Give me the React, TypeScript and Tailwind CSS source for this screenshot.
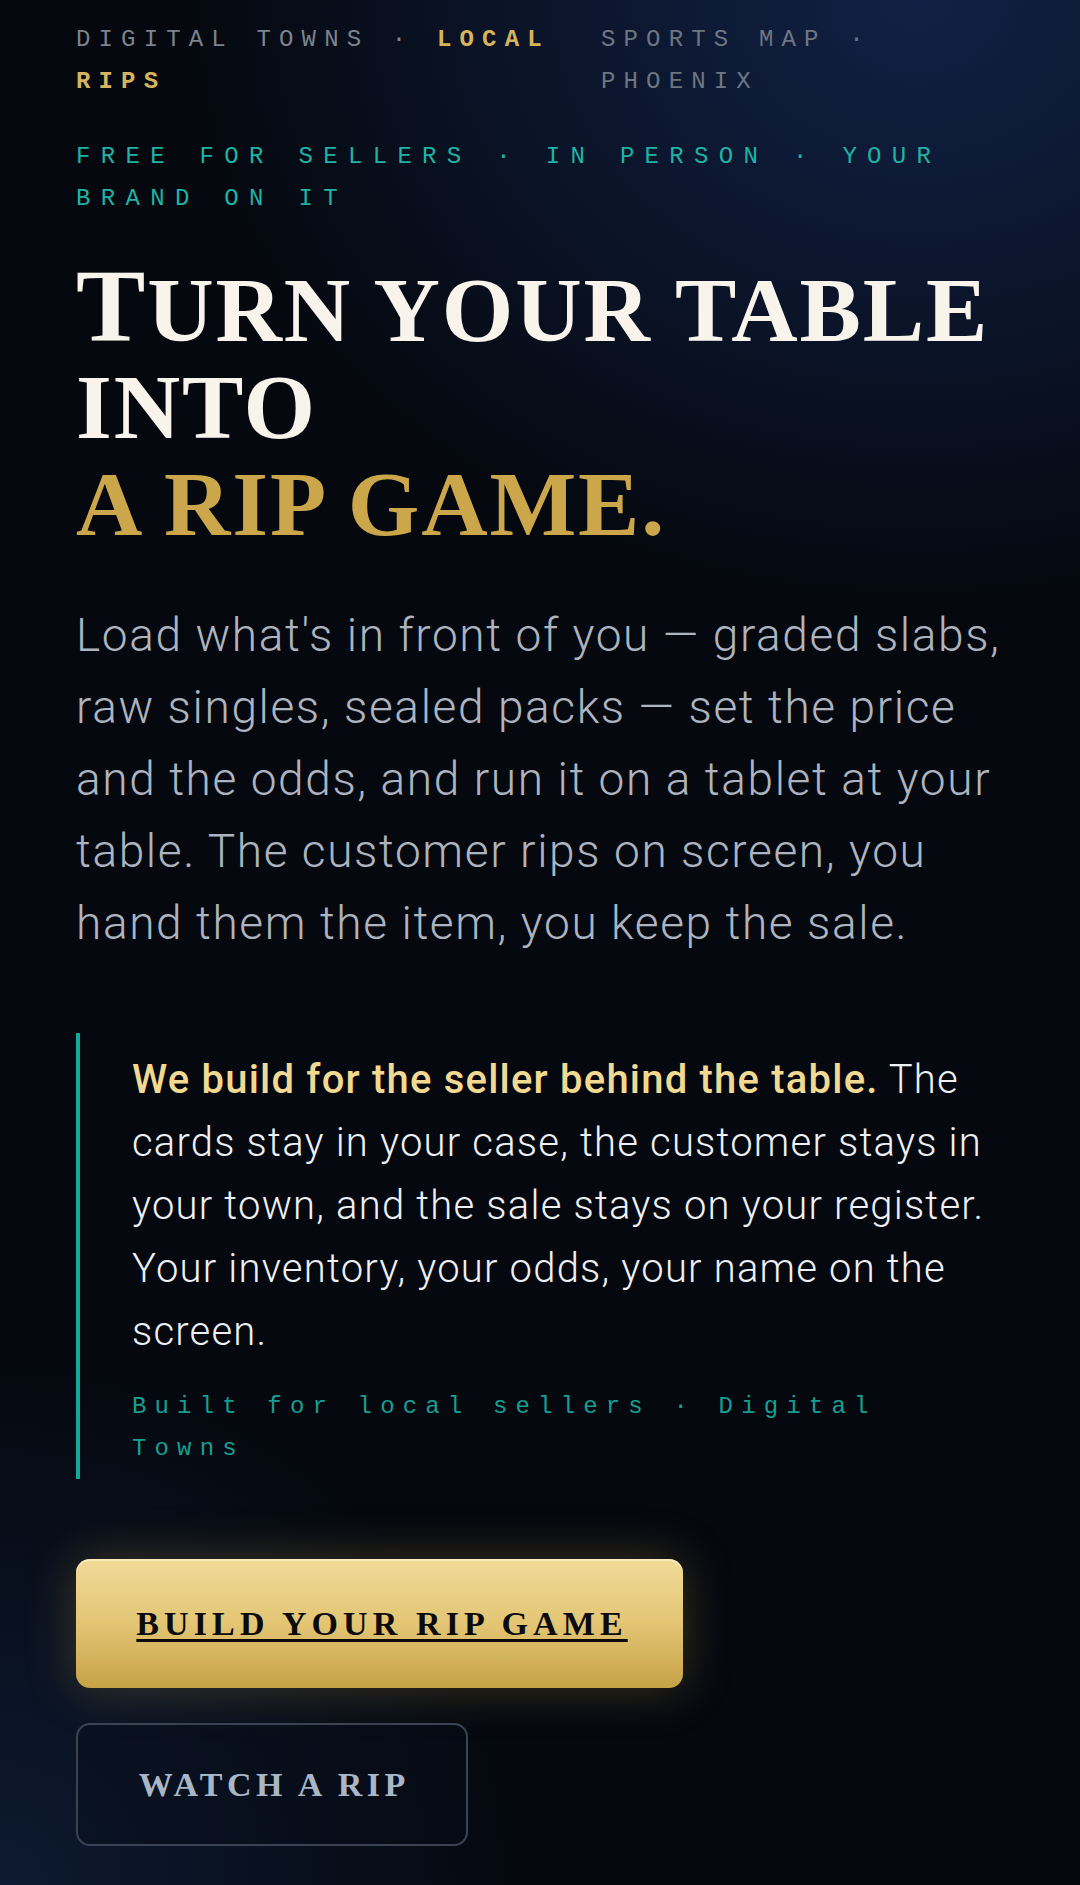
import React from "react";

export default function App() {
  const mono = "font-['Liberation_Mono','DejaVu_Sans_Mono',monospace]";
  const serif = "font-['Liberation_Serif','Times_New_Roman',serif]";
  const sans = "font-['Roboto','Liberation_Sans',sans-serif]";
  return (
    <div className="min-h-[1885px] w-full bg-[#05080f] bg-[radial-gradient(ellipse_85%_40%_at_85%_0%,#112145_0%,rgba(17,33,69,0.45)_45%,transparent_80%),radial-gradient(ellipse_60%_35%_at_0%_100%,#0d1a31_0%,transparent_80%)]">
      <div className="px-[76px] pt-[19px] pb-[40px]">
        {/* top labels */}
        <div className={`flex ${mono} text-[24px] leading-[42px] tracking-[0.34em] uppercase`}>
          <div className="w-[525px] shrink-0 text-[#7d838d]">
            DIGITAL TOWNS · <span className="font-bold text-[#d6b45c]">LOCAL RIPS</span>
          </div>
          <div className="flex-1 text-[#6f7683]">SPORTS MAP · PHOENIX</div>
        </div>

        <div className={`mt-[33px] ${mono} text-[24px] leading-[42px] tracking-[0.43em] uppercase text-[#1fb3a3]`}>
          FREE FOR SELLERS · IN PERSON · YOUR BRAND ON IT
        </div>

        {/* headline */}
        <h1 className={`mt-[42px] ${serif} font-bold uppercase text-[92px] leading-[97px] tracking-[0.02em] text-[#f8f4ec]`}>
          <span className="text-[104px] leading-[0px]">T</span>urn your table
          <br />
          into
          <br />
          <span className="text-[#cba64a]">a rip game.</span>
        </h1>

        {/* paragraph */}
        <p className={`mt-[46px] ${sans} font-light text-[46px] leading-[72px] text-[#adb4bf] tracking-[0.035em]`}>
          Load what's in front of you — graded slabs, raw singles, sealed packs — set the price and the odds, and run it on a tablet at your table. The customer rips on screen, you hand them the item, you keep the sale.
        </p>

        {/* blockquote */}
        <div className="mt-[74px] border-l-4 border-[#14a898] pl-[52px] pt-[15px] pb-[9px]">
          <p className={`${sans} font-light text-[40px] leading-[63px] text-[#eef0f4] tracking-[0.03em]`}>
            <span className="font-medium text-[#f1d991]">We build for the seller behind the table.</span> The cards stay in your case, the customer stays in your town, and the sale stays on your register. Your inventory, your odds, your name on the screen.
          </p>
          <div className={`mt-[23px] ${mono} text-[24px] leading-[42px] tracking-[0.34em] text-[#169f91]`}>
            Built for local sellers · Digital Towns
          </div>
        </div>

        {/* buttons */}
        <div className="mt-[80px] flex flex-col items-start gap-[35px]">
          <button className={`w-[607px] h-[129px] rounded-[14px] bg-linear-to-b from-[#f0db98] via-[#e3c574] to-[#c7a246] shadow-[0_0_50px_rgba(201,165,74,0.28),inset_0_2px_0_rgba(255,245,210,0.6)] flex items-center justify-center ${serif} font-bold text-[34px] tracking-[0.15em] text-[#0b0b0b]`}>
            <span className="underline decoration-[3px] underline-offset-[4px] pl-[0.15em]">BUILD YOUR RIP GAME</span>
          </button>
          <button className={`w-[392px] h-[123px] rounded-[14px] border-2 border-[#394354] bg-[#080d18]/40 flex items-center justify-center ${serif} font-bold text-[34px] tracking-[0.13em] text-[#aab6c6]`}>
            <span className="pl-[0.13em]">WATCH A RIP</span>
          </button>
        </div>
      </div>
    </div>
  );
}
